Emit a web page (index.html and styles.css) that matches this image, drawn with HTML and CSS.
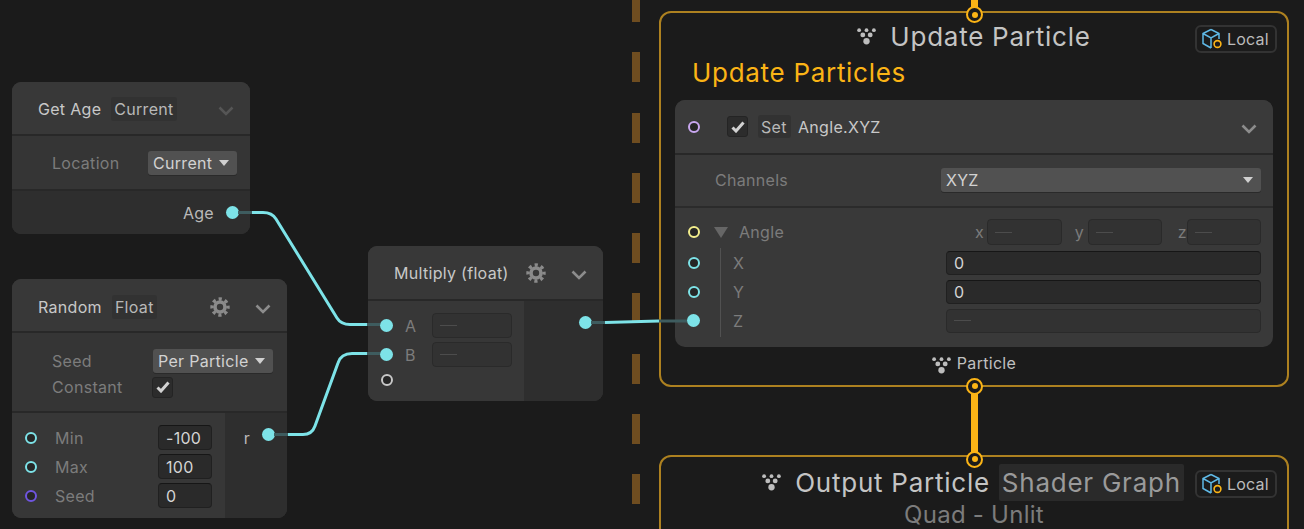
FILE: index.html
```html
<!DOCTYPE html>
<html lang="en">
<head>
<meta charset="utf-8">
<title>VFX Graph</title>
<link rel="stylesheet" href="styles.css">
</head>
<body>
<svg class="defs" width="0" height="0">
  <symbol id="gear" viewBox="0 0 20 20">
    <circle cx="10" cy="10" r="5" fill="none" stroke="currentColor" stroke-width="3.6"/>
    <circle cx="10" cy="10" r="8" fill="none" stroke="currentColor" stroke-width="3.4" stroke-dasharray="3.2 3.08" stroke-dashoffset="1.6"/>
  </symbol>
  <symbol id="chev" viewBox="0 0 16 10">
    <path d="M1.5 1.5 8 8l6.5-6.5" fill="none" stroke="currentColor" stroke-width="2.6"/>
  </symbol>
  <symbol id="check" viewBox="0 0 14 12">
    <path d="M1.5 6.5 5 10l7.5-8.500" fill="none" stroke="currentColor" stroke-width="3"/>
  </symbol>
  <symbol id="vfx" viewBox="1 0.5 18 16">
    <circle cx="3" cy="2.500" r="1.800"/><circle cx="10" cy="2.500" r="1.800"/><circle cx="17" cy="2.500" r="1.800"/>
    <circle cx="6.500" cy="7" r="2.300"/><circle cx="13.500" cy="7" r="2.300"/><circle cx="10" cy="13" r="3"/>
  </symbol>
  <symbol id="cube" viewBox="0 0 22 22">
    <path d="M10 1.500 18 5.500V11M10 1.500 2 5.500V15.500L10 20M2 5.500 10 10 18 5.500M10 10V20" fill="none" stroke="#5fb9e6" stroke-width="1.500"/>
    <circle cx="16.500" cy="16" r="3.400" fill="#1b1b1b" stroke="#fbb416" stroke-width="1.600"/>
  </symbol>
</svg>

<main class="canvas">
  <div class="dashes"></div>

  <section class="node age-node">
    <header class="head">
      <span class="title">Get Age</span><span class="chip">Current</span>
      <svg class="chev dim"><use href="#chev"/></svg>
    </header>
    <div class="settings settings-age">
      <div class="set-row"><span class="lbl lbl-loc">Location</span><span class="drop drop-cur">Current<i class="tri"></i></span></div>
    </div>
    <div class="out-row out-age"><span class="name">Age</span><span class="dot"></span></div>
  </section>

  <section class="node random-node">
    <header class="head">
      <span class="title">Random</span><span class="chip">Float</span>
      <svg class="gear"><use href="#gear"/></svg>
      <svg class="chev"><use href="#chev"/></svg>
    </header>
    <div class="settings settings-rand">
      <div class="set-row"><span class="lbl lbl-seed">Seed</span><span class="drop drop-part">Per Particle<i class="tri"></i></span></div>
      <div class="set-row"><span class="lbl lbl-const">Constant</span><span class="box"><svg class="tick"><use href="#check"/></svg></span></div>
    </div>
    <div class="ports">
      <div class="col-in col-rand">
        <div class="p-row"><span class="ring cyan"></span><span class="lbl p-lbl">Min</span><span class="field f-rand">-100</span></div>
        <div class="p-row"><span class="ring cyan"></span><span class="lbl p-lbl">Max</span><span class="field f-rand">100</span></div>
        <div class="p-row"><span class="ring violet"></span><span class="lbl p-lbl">Seed</span><span class="field f-rand">0</span></div>
      </div>
      <div class="col-out out-r"><span class="name">r</span><span class="dot"></span></div>
    </div>
  </section>

  <section class="node mult-node">
    <header class="head">
      <span class="title">Multiply (float)</span>
      <svg class="gear"><use href="#gear"/></svg>
      <svg class="chev"><use href="#chev"/></svg>
    </header>
    <div class="ports">
      <div class="col-in col-mult">
        <div class="p-row"><span class="dot"></span><span class="lbl m-lbl">A</span><span class="field off f-mult"><b></b></span></div>
        <div class="p-row"><span class="dot"></span><span class="lbl m-lbl">B</span><span class="field off f-mult"><b></b></span></div>
        <div class="p-row m-last"><span class="ring white"></span></div>
      </div>
      <div class="col-out out-mult"><span class="dot"></span></div>
    </div>
  </section>

  <section class="ctx ctx-update">
    <div class="ctx-title"><svg class="vfx"><use href="#vfx"/></svg><span>Update Particle</span></div>
    <span class="badge"><svg class="cube"><use href="#cube"/></svg>Local</span>
    <h2 class="ctx-name">Update Particles</h2>
    <div class="block">
      <header class="block-head">
        <span class="ring lav"></span>
        <span class="box box-set"><svg class="tick"><use href="#check"/></svg></span>
        <span class="chip chip-set">Set</span><span class="title">Angle.XYZ</span>
        <svg class="chev"><use href="#chev"/></svg>
      </header>
      <div class="channels"><span class="lbl">Channels</span><span class="drop drop-xyz">XYZ<i class="tri"></i></span></div>
      <div class="vec">
        <div class="v-row">
          <span class="ring yellow"></span><i class="tri big"></i><span class="lbl v-angle">Angle</span>
          <span class="lbl axis ax-x">x</span><span class="field off f-xyz f-x"><b></b></span>
          <span class="lbl axis ax-y">y</span><span class="field off f-xyz"><b></b></span>
          <span class="lbl axis ax-z">z</span><span class="field off f-xyz"><b></b></span>
        </div>
        <div class="sub">
          <div class="v-row"><span class="ring cyan"></span><span class="lbl v-lbl">X</span><span class="field f-long">0</span></div>
          <div class="v-row"><span class="ring cyan"></span><span class="lbl v-lbl">Y</span><span class="field f-long">0</span></div>
          <div class="v-row"><span class="dot"></span><span class="lbl v-lbl">Z</span><span class="field off f-long"><b></b></span></div>
        </div>
      </div>
    </div>
    <div class="ctx-foot"><svg class="vfx small"><use href="#vfx"/></svg>Particle</div>
  </section>

  <section class="ctx ctx-output">
    <div class="ctx-title out-title"><svg class="vfx"><use href="#vfx"/></svg><span>Output Particle</span><span class="chip-big">Shader Graph</span></div>
    <span class="badge badge-out"><svg class="cube"><use href="#cube"/></svg>Local</span>
    <div class="ctx-sub">Quad - Unlit</div>
  </section>

  <div class="flow-wire flow-top"></div>
  <div class="flow-wire flow-mid"></div>
  <span class="flow-port fp-1"></span>
  <span class="flow-port fp-2"></span>
  <span class="flow-port fp-3"></span>

  <svg class="wires" viewBox="0 0 1304 529" width="1304" height="529">
    <g class="bright">
      <path d="M252 212.500H263Q272 212.500 276 219L337 318Q341 324.500 350 324.500H367"/>
      <path d="M288 434.500H303Q312 434.500 315 426L338 363Q341 353.500 352 353.500H367"/>
      <path d="M605 322.500L659 321"/>
    </g>
    <g class="faint">
      <path d="M238 212.500H252"/>
      <path d="M274 434.500H288"/>
      <path d="M367 324.500H380"/>
      <path d="M367 353.500H380"/>
      <path d="M591 322.500H605"/>
      <path d="M659 321H687"/>
    </g>
  </svg>
</main>
</body>
</html>
```

FILE: styles.css
```css
* { box-sizing: border-box; }
html, body { margin: 0; padding: 0; background: #1b1b1b; }
body { width: 1304px; height: 529px; overflow: hidden; font-family: Inter, "Liberation Sans", sans-serif; color: #c8c8c8; }
.defs { position: absolute; }
.canvas { position: relative; width: 1304px; height: 529px; overflow: hidden; background: #1b1b1b; }

/* Dashed spawner divider */
.dashes { position: absolute; left: 632px; top: -8px; width: 8px; height: 537px;
  background: repeating-linear-gradient(to bottom, #6f4d20 0 30px, transparent 30px 60.3px); }

/* Nodes */
.node { position: absolute; border-radius: 9px; overflow: hidden; background: #353535; font-size: 16px; letter-spacing: 0.3px; }
.age-node { left: 12px; top: 82px; width: 238px; height: 152px; }
.random-node { left: 12px; top: 279px; width: 275px; height: 239px; }
.mult-node { left: 368px; top: 246px; width: 235px; height: 155px; }

.head { display: flex; align-items: center; height: 54px; padding: 2px 16px 0 26px; background: #383838; border-bottom: 2px solid #282828; }
.random-node .head { padding-top: 4px; }
.mult-node .head { height: 55px; padding-top: 0; }
.title { color: #c8c8c8; white-space: nowrap; }
.chip { margin-left: 10px; padding: 0 3px; height: 24px; line-height: 24px; background: #323232; border-radius: 3px; color: #b8b8b8; white-space: nowrap; }
.chev { width: 16px; height: 10px; margin-left: auto; color: #8c8c8c; flex: none; position: relative; top: 2px; }
.chev.dim { color: #555; }
.gear { width: 20px; height: 20px; margin-left: auto; color: #8a8a8a; flex: none; }
.gear + .chev { margin-left: 25px; }

.settings { border-bottom: 2px solid #282828; }
.settings-age { height: 55px; padding: 14px 13px 0 40px; }
.settings-rand { height: 80px; padding: 15px 13px 0 40px; }
.set-row { display: flex; align-items: center; height: 26px; }
.lbl { color: #7c7c7c; white-space: nowrap; }
.lbl-loc { width: 96px; }
.lbl-seed { width: 101px; }
.lbl-const { width: 100px; }
.drop { display: flex; align-items: center; height: 24px; padding: 0 8px 0 5px; background: #515151; border-radius: 3px; box-shadow: 0 1px 0 #2a2a2a; color: #d2d2d2; white-space: nowrap; }
.drop-cur { width: 89px; }
.drop-part { width: 120px; }
.drop-xyz { width: 320px; }
.tri { display: block; width: 0; height: 0; margin-left: auto; border-left: 5.500px solid transparent; border-right: 5.500px solid transparent; border-top: 6px solid #d0d0d0; }
.box { display: flex; align-items: center; justify-content: center; width: 21px; height: 21px; background: #2c2c2c; border-radius: 3px; border: 1px solid #242424; flex: none; }
.tick { width: 14px; height: 12px; color: #d2d2d2; }

.out-row { display: flex; align-items: center; justify-content: flex-end; }
.out-age { height: 43px; padding-right: 11px; background: #2e2e2e; gap: 12px; }
.name { color: #b9b9b9; }
.dot { display: block; width: 13px; height: 13px; border-radius: 50%; background: #7de3e8; flex: none; }
.ring { display: block; width: 12px; height: 12px; margin: 0 0.500px; border-radius: 50%; border: 2px solid #7de3e8; background: #262626; flex: none; }
.cyan { border-color: #7de3e8; }
.violet { border-color: #6f55e0; }
.white { border-color: #c8c8c8; }
.lav { border-color: #c9a7f0; }
.yellow { border-color: #f3ee8c; }

.ports { display: flex; height: calc(100% - 55px); }
.random-node .ports { height: 105px; }
.col-in { flex: none; background: #373737; }
.col-out { flex: 1; background: #2e2e2e; display: flex; align-items: flex-start; justify-content: flex-end; }
.col-rand { width: 213px; padding: 10px 0 0 12px; }
.col-mult { width: 156px; padding: 10px 0 0 12px; }
.out-r { padding: 15px 12px 0 0; gap: 12px; }
.out-mult { padding: 15px 11px 0 0; }
.p-row { display: flex; align-items: center; height: 29px; }
.m-last { height: 22px; }
.p-lbl { margin-left: 18px; width: 103px; }
.m-lbl { margin-left: 12px; width: 27px; }
.field { display: flex; align-items: center; height: 25px; padding: 0 7px; background: #2a2a2a; border: 1px solid #202020; border-top-color: #161616; border-radius: 4px; color: #d4d4d4; flex: none; }
.field.off { background: #323232; border-color: #2a2a2a; }
.field b { display: block; width: 17px; height: 1px; background: #4c4c4c; }
.f-rand { width: 54px; }
.f-mult { width: 80px; }
.f-xyz { width: 74px; height: 26px; }
.f-x { width: 75px; }
.f-long { width: 315px; height: 24px; margin-left: auto; }

/* Contexts */
.ctx { position: absolute; left: 659px; width: 630px; border: 2px solid #ad8120; border-radius: 12px; background: #1b1b1b; }
.ctx-update { top: 11px; height: 376px; padding: 0 14px; }
.ctx-output { top: 455px; height: 120px; }
.ctx-title { display: flex; align-items: center; justify-content: center; height: 46px; font-size: 26px; letter-spacing: 0.75px; color: #c4c4c4; white-space: nowrap; }
.ctx-update .ctx-title { margin: 0 -14px; }
.vfx { width: 19px; height: 17px; margin-right: 14px; fill: #bdbdbd; flex: none; }
.vfx.small { margin-right: 6px; position: relative; top: 2px; }
.badge { position: absolute; right: 10px; top: 12px; display: flex; align-items: center; gap: 4px; width: 82px; height: 28px; padding-left: 4px; border: 2px solid #333; border-radius: 6px; font-size: 16px; letter-spacing: 0.2px; color: #bcbcbc; }
.badge-out { top: 13px; }
.cube { width: 22px; height: 22px; flex: none; }
.ctx-name { margin: -1px 0 0; padding-left: 17px; font-size: 26px; line-height: 30px; font-weight: 400; color: #fbb416; letter-spacing: 0.7px; white-space: nowrap; }
.block { margin-top: 12px; height: 247px; border-radius: 10px; overflow: hidden; background: #393939; font-size: 16px; letter-spacing: 0.3px; }
.block-head { display: flex; align-items: center; height: 55px; padding: 0 16px 0 12px; background: #3a3a3a; border-bottom: 2px solid #282828; }
.box-set { margin-left: 27px; }
.chip-set { margin-left: 10px; width: 33px; height: 23px; line-height: 25px; }
.block-head .title { margin-left: 7px; }
.channels { display: flex; align-items: center; height: 53px; padding: 0 12px 2px 40px; border-bottom: 2px solid #2b2b2b; }
.channels .lbl { width: 226px; }
.vec { padding: 11px 12px 0 12px; }
.v-row { display: flex; align-items: center; height: 26px; }
.v-row .tri.big { margin-left: 14px; border-left-width: 7px; border-right-width: 7px; border-top: 11px solid #666; }
.v-angle { margin-left: 11px; width: 192px; }
.axis { text-align: right; flex: none; }
.ax-x { width: 55px; margin-right: 3px; }
.ax-y { width: 22px; margin-right: 4px; }
.ax-z { width: 25px; }
.sub { position: relative; margin-top: 3px; }
.sub .v-row { height: 29px; }
.sub::before { content: ""; position: absolute; left: 33px; top: 0; bottom: -2px; width: 1px; background: #515151; }
.v-lbl { margin-left: 33px; }
.ctx-foot { display: flex; align-items: center; justify-content: center; margin: 5px -14px 0; height: 22px; font-size: 16px; letter-spacing: 0.3px; color: #c0c0c0; }

.out-title { height: 50px; margin: 0; padding-right: 2px; }
.chip-big { margin-left: 9px; padding: 0 3px; height: 37px; line-height: 37px; background: #2a2a2a; border-radius: 2px; color: #9a9a9a; }
.ctx-sub { margin-top: -5px; text-align: center; font-size: 24px; line-height: 26px; color: #7c7c7c; letter-spacing: 0.25px; }

/* Flow connectors */
.flow-wire { position: absolute; left: 971px; width: 7px; background: #fbb416; }
.flow-top { top: 0; height: 10px; }
.flow-mid { top: 386px; height: 72px; }
.flow-port { position: absolute; left: 966px; width: 17px; height: 17px; border-radius: 50%; border: 2px solid #fbb416; background: #1b1b1b; }
.flow-port::after { content: ""; position: absolute; left: 3.500px; top: 3.500px; width: 6px; height: 6px; border-radius: 50%; background: #fbb416; }
.fp-1 { top: 6px; }
.fp-2 { top: 377.500px; }
.fp-3 { top: 450.500px; }

/* Wires */
.wires { position: absolute; left: 0; top: 0; pointer-events: none; }
.wires path { fill: none; stroke-width: 3; }
.bright path { stroke: #7de3e8; }
.faint path { stroke: #3e5c5f; }
```
